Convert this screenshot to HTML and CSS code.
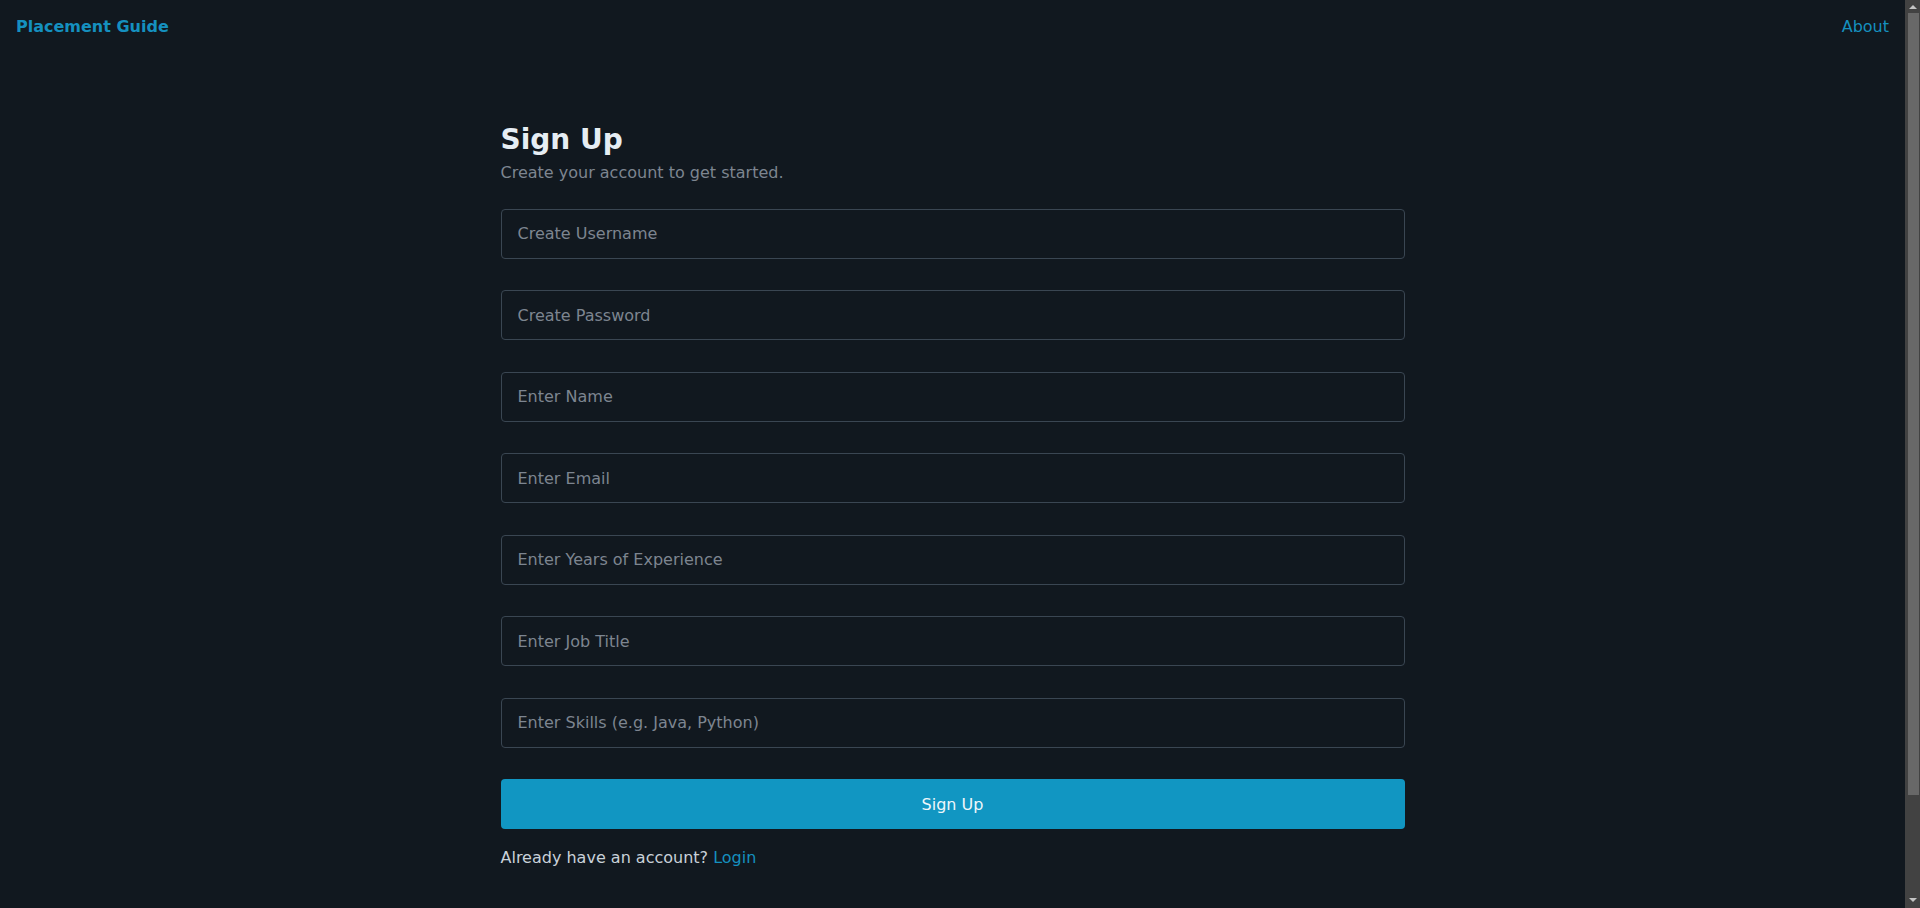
FILE: index.html
```html
<!DOCTYPE html>
<html lang="en">
<head>
<meta charset="utf-8">
<title>Sign Up - Placement Guide</title>
<link rel="stylesheet" href="styles.css">
</head>
<body>
<div class="app">
  <nav class="navbar">
    <a class="brand" href="#">Placement Guide</a>
    <a class="nav-link" href="#">About</a>
  </nav>
  <main class="page">
    <section class="card">
      <h1 class="title">Sign Up</h1>
      <p class="subtitle">Create your account to get started.</p>
      <form class="form">
        <input class="field" type="text" placeholder="Create Username">
        <input class="field" type="password" placeholder="Create Password">
        <input class="field" type="text" placeholder="Enter Name">
        <input class="field" type="email" placeholder="Enter Email">
        <input class="field" type="text" placeholder="Enter Years of Experience">
        <input class="field" type="text" placeholder="Enter Job Title">
        <input class="field" type="text" placeholder="Enter Skills (e.g. Java, Python)">
        <button class="submit" type="button">Sign Up</button>
      </form>
      <p class="alt">Already have an account? <a class="link" href="#">Login</a></p>
    </section>
  </main>
</div>
<div class="scrollbar" aria-hidden="true">
  <span class="arrow arrow-up"></span>
  <span class="thumb"></span>
  <span class="arrow arrow-down"></span>
</div>
</body>
</html>
```
FILE: styles.css
```css
* { box-sizing: border-box; }
html, body {
  margin: 0;
  padding: 0;
  background: #11181f;
  font-family: "DejaVu Sans", sans-serif;
  font-size: 16px;
  line-height: 24px;
  color: #c9d1d9;
}
.app {
  margin-right: 15px;
}
.navbar {
  display: flex;
  justify-content: space-between;
  align-items: center;
  padding: 15px 16px 13px;
}
.brand {
  color: #1590bf;
  font-weight: bold;
  text-decoration: none;
}
.nav-link {
  color: #1590bf;
  text-decoration: none;
}
.page {
  display: flex;
  justify-content: center;
  padding: 71px 0 156px;
}
.card {
  width: 904px;
}
.title {
  margin: 0 0 4px;
  font-size: 28px;
  line-height: 1.2;
  font-weight: bold;
  color: #e6edf3;
}
.subtitle {
  margin: 0 0 24px;
  color: #7d8590;
}
.form {
  display: flex;
  flex-direction: column;
  gap: 31.5px;
}
.field {
  display: block;
  width: 100%;
  height: 50px;
  padding: 12px 16px;
  font-family: "DejaVu Sans", sans-serif;
  font-size: 16px;
  line-height: 24px;
  color: #c9d1d9;
  background: #11181f;
  border: 1px solid #3a4652;
  border-radius: 4px;
  outline: none;
}
.field::placeholder {
  color: #7d8590;
  opacity: 1;
}
.submit {
  height: 50px;
  border: none;
  border-radius: 4px;
  background: #1196c2;
  color: #eef7fb;
  font-family: "DejaVu Sans", sans-serif;
  font-size: 16px;
  cursor: pointer;
}
.alt {
  margin: 17px 0 0;
  color: #c9d1d9;
}
.link {
  color: #1590bf;
  text-decoration: none;
}
.scrollbar {
  position: fixed;
  top: 0;
  right: 0;
  width: 15px;
  height: 100vh;
  background: #424242;
  display: flex;
  flex-direction: column;
  align-items: center;
}
.arrow {
  display: block;
  width: 0;
  height: 0;
  border-left: 4px solid transparent;
  border-right: 4px solid transparent;
}
.arrow-up {
  margin-top: 5px;
  border-bottom: 4px solid #c4c4c4;
}
.thumb {
  display: block;
  width: 11px;
  height: 782px;
  margin-top: 4px;
  margin-left: 2px;
  background: #686868;
}
.arrow-down {
  margin-top: auto;
  margin-bottom: 6px;
  border-top: 4px solid #c4c4c4;
}
```
